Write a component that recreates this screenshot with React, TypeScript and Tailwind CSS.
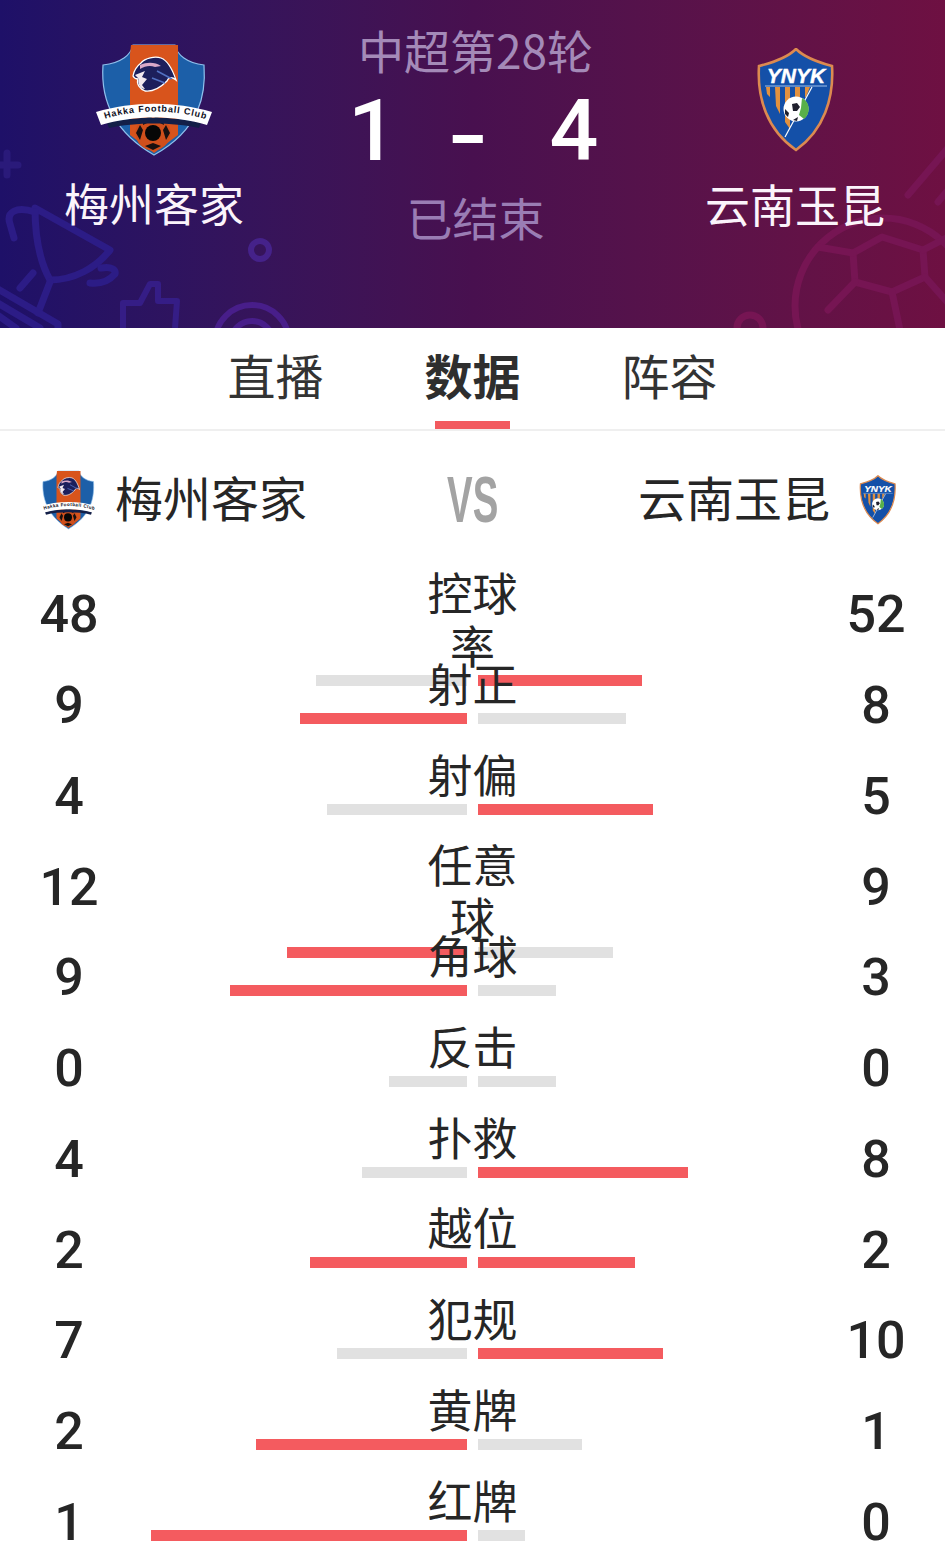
const CJK = "font-['Noto_Sans_CJK_SC','Noto_Sans',sans-serif]";

type Side = { w: number; red: boolean };
type Row = { l: string; r: string; label: string; a: Side; b: Side };

const rows: Row[] = [
  { l: "48", r: "52", label: "控球率", a: { w: 151, red: false }, b: { w: 164, red: true } },
  { l: "9", r: "8", label: "射正", a: { w: 167, red: true }, b: { w: 148, red: false } },
  { l: "4", r: "5", label: "射偏", a: { w: 140, red: false }, b: { w: 175, red: true } },
  { l: "12", r: "9", label: "任意球", a: { w: 180, red: true }, b: { w: 135, red: false } },
  { l: "9", r: "3", label: "角球", a: { w: 237, red: true }, b: { w: 78, red: false } },
  { l: "0", r: "0", label: "反击", a: { w: 78, red: false }, b: { w: 78, red: false } },
  { l: "4", r: "8", label: "扑救", a: { w: 105, red: false }, b: { w: 210, red: true } },
  { l: "2", r: "2", label: "越位", a: { w: 157, red: true }, b: { w: 157, red: true } },
  { l: "7", r: "10", label: "犯规", a: { w: 130, red: false }, b: { w: 185, red: true } },
  { l: "2", r: "1", label: "黄牌", a: { w: 211, red: true }, b: { w: 104, red: false } },
  { l: "1", r: "0", label: "红牌", a: { w: 316, red: true }, b: { w: 47, red: false } },
];

function HakkaLogo({ w, h, id }: { w: number; h: number; id: string }) {
  return (
    <svg width={w} height={h} viewBox="0 0 118 114" preserveAspectRatio="none" className="shrink-0">
      <path d="M38 2H80C82 12 92 20 109 22C111 50 106 86 59 112C14 86 6 50 8 22C26 20 36 12 38 2Z" fill="#1c5fa8" stroke="#8fc0ec" strokeWidth="1.2" />
      <path d="M36 2H83V92L59 110L35 92V11Z" fill="#d8541c" />
      <path d="M38 33C39 27 42 23 46 20C50 15 60 13 66 15C74 18 78 28 81 37C76 33 73 35 72 38C65 45 58 49 50 48C45 46 41 41 43 36C41 36 39 35 38 33Z" fill="#1d1f5c" stroke="#ffffff" strokeWidth="1.3" />
      <path d="M40 32L50 28L47 34L52 36L47 42L50 46C45 46 42 40 44 36Z" fill="#f2e8ee" />
      <path d="M45 22C52 19 60 19 66 23L60 24C55 22 50 23 45 26Z" fill="#d9a8c8" />
      <path d="M62 28L77 36M57 35L70 40" stroke="#5270c2" strokeWidth="1.6" />
      <circle cx="58" cy="90" r="17.5" fill="#cf4f1c" />
      <circle cx="58" cy="90" r="8" fill="#070707" />
      <path d="M48 76L57 73L56 78L48 82Z M68 76L59 73L61 78L69 82Z M41 90L45 82L48 87L45 97Z M75 90L71 82L68 87L71 97Z M50 103L58 100L66 103L58 107Z" fill="#171010" />
      <path d="M12 80C40 73 78 73 106 80L104 85C78 79 40 79 14 85Z" fill="#131f48" />
      <path d="M1 69C38 58 80 58 117 69L112 82C80 72 38 72 6 82Z" fill="#ffffff" />
      <path id={id} d="M9 76C40 66 78 66 110 76" fill="none" />
      <text fontFamily="'Liberation Sans',sans-serif" fontSize="9" fontWeight="700" fill="#0e0e22" letterSpacing="0.85">
        <textPath href={`#${id}`} startOffset="1">Hakka Football Club</textPath>
      </text>
    </svg>
  );
}

function YnykLogo({ w, h }: { w: number; h: number }) {
  return (
    <svg width={w} height={h} viewBox="0 0 78 104" className="shrink-0">
      <path d="M40 1C48 9 61 14 76 18C78 50 68 82 40 102C11 82 1 50 3 18C19 14 32 9 40 1Z" fill="#1450a8" stroke="#dc8a50" strokeWidth="2.6" />
      <path d="M10 39H14V49L11 46Z M19 39H24V66L20 58Z M29 39H34V81L29 74Z M39 39H44V49H39Z M49 39H54L50 49H49Z" fill="#e2913f" />
      <text x="40" y="35" textAnchor="middle" fontFamily="'Liberation Sans',sans-serif" fontSize="21" fontStyle="italic" fontWeight="700" fill="#ffffff" stroke="#ffffff" strokeWidth="0.4">YNYK</text>
      <path d="M9 38H71" stroke="#9fc0ea" strokeWidth="1" />
      <path d="M56 39L29 89" stroke="#ffffff" strokeWidth="1.2" />
      <circle cx="40" cy="61" r="12.5" fill="#ffffff" />
      <path d="M46 50A12.5 12.5 0 0 1 48 71L43 67L45 60Z" fill="#58b04a" />
      <path d="M36 56L41 55L44 59L41 63H37Z M29 61L33 65L32 69L29 66Z M42 69L37 72L41 73Z" fill="#20202e" />
    </svg>
  );
}

function HeaderArt() {
  return (
    <svg className="absolute inset-0" width="945" height="328" viewBox="0 0 945 328" fill="none">
      <g stroke="#2c1c86" strokeWidth="7" strokeLinejoin="round" strokeLinecap="round">
        <path d="M-2 165H18M7 153V175" stroke="#2a1a7a" />
        <path d="M35 208L110 250C96 268 74 280 50 280C40 262 35 235 35 208Z" />
        <path d="M35 212C16 206 6 212 10 224L14 238M101 268C112 266 116 270 115 274C108 282 98 284 90 283" />
        <path d="M33 273L20 288M50 282L38 313" />
        <path d="M-4 288L58 324V332M-4 302L40 328M-4 314L16 328" />
      </g>
      <g strokeWidth="6" strokeLinejoin="round">
        <path d="M123 328V303H140L150 284H158V301H177L175 328" stroke="#351d86" />
        <circle cx="260" cy="250" r="9" stroke="#45228a" />
        <circle cx="252" cy="342" r="37" stroke="#481e8a" />
        <circle cx="252" cy="342" r="21" stroke="#481e8a" />
      </g>
      <g stroke="#761553" strokeWidth="7" strokeLinejoin="round" strokeLinecap="round">
        <circle cx="883" cy="306" r="88" />
        <path d="M853 253L882 237L923 250L925 277L892 292L855 282Z" />
        <path d="M853 253L818 247M855 282L828 310M892 292L900 330M925 277L950 305M923 250L950 236" />
        <path d="M908 195L948 148" />
        <path d="M938 202L948 190" />
        <circle cx="750" cy="328" r="13" />
      </g>
    </svg>
  );
}

function Bar({ w, red }: Side) {
  return <div className={`h-[11px] ${red ? "bg-[#f45b5f]" : "bg-[#e1e1e1]"}`} style={{ width: w }} />;
}

function StatRow({ row }: { row: Row }) {
  return (
    <div className="flex h-[90.75px] items-center text-[#262626]">
      <div className="w-[138px] shrink-0 pt-[4px] text-center font-['Roboto',sans-serif] text-[52px] font-medium leading-none">{row.l}</div>
      <div className="flex h-full flex-1 flex-col self-start">
        <div className={`relative z-10 mx-auto -mt-[3px] w-[92px] text-center text-[45px] leading-[53px] ${CJK}`}>{row.label}</div>
        <div className="mt-[4px] flex shrink-0 justify-center gap-[11px]">
          <div className="flex w-[316px] justify-end">
            <Bar {...row.a} />
          </div>
          <div className="flex w-[316px] justify-start">
            <Bar {...row.b} />
          </div>
        </div>
      </div>
      <div className="w-[138px] shrink-0 pt-[4px] text-center font-['Roboto',sans-serif] text-[52px] font-medium leading-none">{row.r}</div>
    </div>
  );
}

export default function App() {
  return (
    <div className={`h-[1559px] w-[945px] overflow-hidden bg-white ${CJK}`}>
      <header className="relative flex h-[328px] overflow-hidden bg-gradient-to-r from-[#1e1068] via-[#48104f] to-[#6e1042]">
        <HeaderArt />
        <div className="relative flex w-[308px] flex-col items-center pt-[43px]">
          <HakkaLogo w={118} h={114} id="hakka-big" />
          <div className="mt-[18px] text-[45px] leading-[56px] text-[#fbf4fb]">梅州客家</div>
        </div>
        <div className="relative flex flex-1 flex-col items-center pt-[20px]">
          <div className="-ml-[2px] text-[46px] leading-[58px] text-[#a48ab8]">中超第28轮</div>
          <div className="mt-[8px] flex h-[90px] w-[247px] items-center justify-between font-['Roboto',sans-serif] text-[86px] font-medium leading-none text-white">
            <span className="-ml-[5px] w-[36px] text-center">1</span>
            <span className="ml-[3px] w-[36px] translate-y-[5px] scale-x-[1.35] text-center">-</span>
            <span className="w-[52px] text-center">4</span>
          </div>
          <div className="-ml-[2px] mt-[11px] text-[46px] leading-[58px] text-[#9a7db4]">已结束</div>
        </div>
        <div className="relative flex w-[300px] flex-col items-center pt-[48px]">
          <YnykLogo w={78} h={104} />
          <div className="mt-[24px] text-[45px] leading-[56px] text-[#fbf4fb]">云南玉昆</div>
        </div>
      </header>

      <nav className="flex h-[103px] justify-center border-b-2 border-[#efefef] text-[48px] text-[#333333]">
        <div className="flex w-[197px] flex-col items-center pt-[17px]">
          <span className="leading-[58px]">直播</span>
        </div>
        <div className="flex w-[197px] flex-col items-center pt-[17px]">
          <span className="font-bold leading-[58px] text-[#2e2e2e]">数据</span>
          <span className="mt-[18px] h-[8px] w-[75px] bg-[#f25a5f]" />
        </div>
        <div className="flex w-[197px] flex-col items-center pt-[17px]">
          <span className="leading-[58px]">阵容</span>
        </div>
      </nav>

      <section className="flex h-[137px] items-center pl-[39px] pr-[49px] text-[48px] text-[#262626]">
        <div className="flex flex-1 items-center gap-[17px]">
          <HakkaLogo w={59} h={60} id="hakka-small" />
          <span className="-translate-y-[4px]">梅州客家</span>
        </div>
        <span className="ml-[10px] scale-x-[0.6] font-['Liberation_Sans',sans-serif] text-[64px] font-bold leading-none text-[#a3a3a3]">VS</span>
        <div className="flex flex-1 items-center justify-end gap-[29px]">
          <span className="-translate-y-[4px]">云南玉昆</span>
          <YnykLogo w={37} h={52} />
        </div>
      </section>

      {rows.map((row) => (
        <StatRow key={row.label} row={row} />
      ))}
    </div>
  );
}
